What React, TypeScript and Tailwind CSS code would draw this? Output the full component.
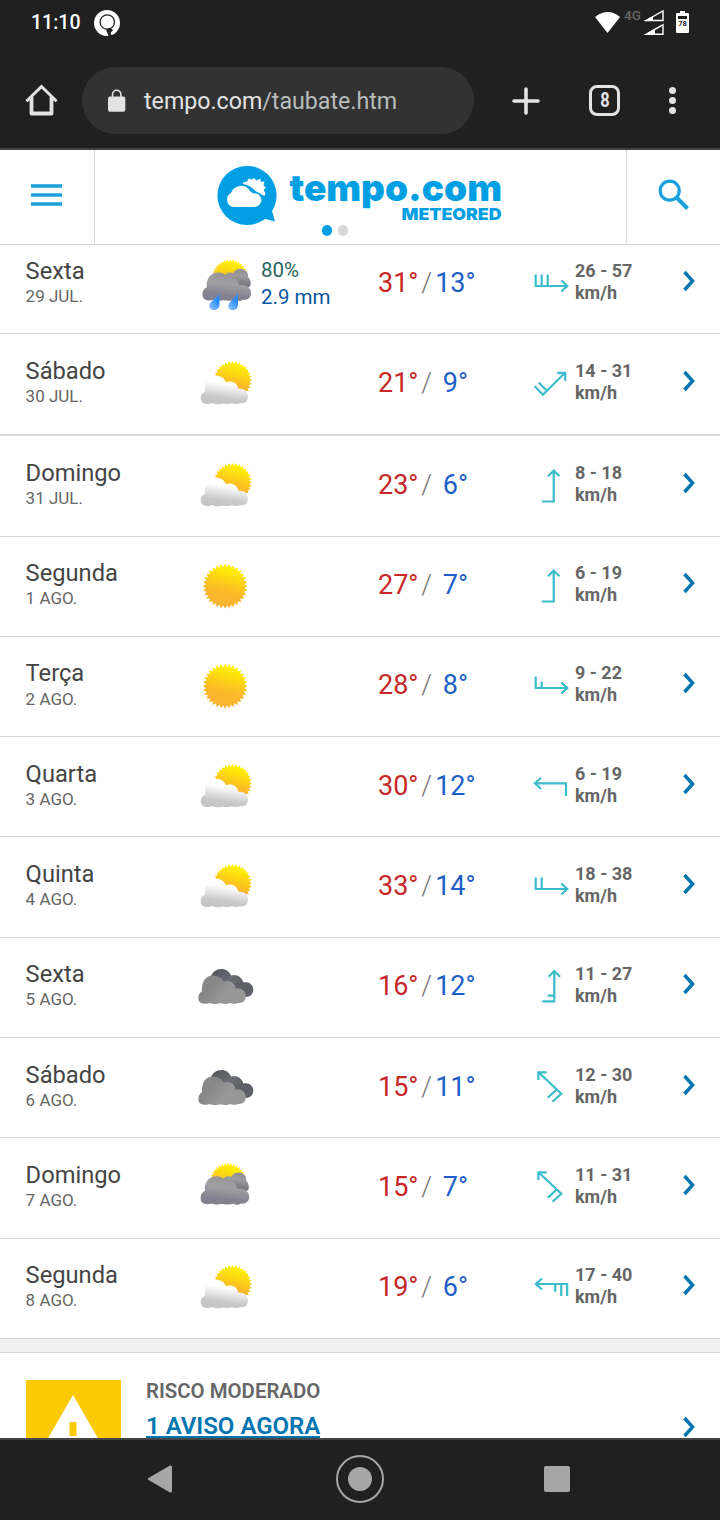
import type { ReactNode } from 'react';

type Sky = 'rain' | 'partly' | 'sun' | 'overcast' | 'cloudy';

interface Day {
  name: string;
  date: string;
  sky: Sky;
  max: number;
  min: number;
  wind: string;
  arrow: string;
  box: string;
  rain?: { chance: string; amount: string };
}

// Wind barbs, drawn in a 40x40 box
const ARROWS = {
  east3: 'M4.7 8.5V20H36.5M10.7 8.5V20M16.7 8.5V20M30.3 14.5L36.3 20L30.3 25.5',
  east2: 'M4.7 8.5V20H36.5M10.7 8.5V20M30.3 14.5L36.3 20L30.3 25.5',
  east15: 'M4.7 8.5V20H36.5M10.7 13.5V20M30.3 14.5L36.3 20L30.3 25.5',
  northEast: 'M34 6.8L12 28.8L3.7 20.2M16 25L7.7 16.5M26.3 6.8H34.2V14.8',
  north: 'M22.7 2.5V33.5H10.7M17 8.3L22.7 2.5L28.4 8.3',
  north15: 'M23.3 2V32.3H11.3M23.3 26.7H16.7M17.6 7.8L23.3 2L29 7.8',
  west: 'M4 14.3H35V27M10 8.7L4 14.3L10 20',
  west25: 'M5 14H36.2V26M30.2 14V26M24.2 14V21.7M11 8.5L5 14L11 19.5',
  northWest: 'M7.5 2.3L30.3 23.7L21.5 31.8M25.6 19.5L16.8 27.8M7.4 10V2.3H15.6',
};

const DAYS: Day[] = [
  { name: 'Sexta', date: '29 JUL.', sky: 'rain', max: 31, min: 13, wind: '26 - 57', arrow: ARROWS.east3, box: '-mt-[11px] h-[100px] border-b pt-px', rain: { chance: '80%', amount: '2.9 mm' } },
  { name: 'Sábado', date: '30 JUL.', sky: 'partly', max: 21, min: 9, wind: '14 - 31', arrow: ARROWS.northEast, box: 'h-[102px] border-b-2 pt-px' },
  { name: 'Domingo', date: '31 JUL.', sky: 'partly', max: 23, min: 6, wind: '8 - 18', arrow: ARROWS.north, box: 'h-[101px] border-b pt-px' },
  { name: 'Segunda', date: '1 AGO.', sky: 'sun', max: 27, min: 7, wind: '6 - 19', arrow: ARROWS.north, box: 'h-[100px] border-b' },
  { name: 'Terça', date: '2 AGO.', sky: 'sun', max: 28, min: 8, wind: '9 - 22', arrow: ARROWS.east15, box: 'h-[100px] border-b pt-[0.4px]' },
  { name: 'Quarta', date: '3 AGO.', sky: 'partly', max: 30, min: 12, wind: '6 - 19', arrow: ARROWS.west, box: 'h-[100px] border-b pt-px' },
  { name: 'Quinta', date: '4 AGO.', sky: 'partly', max: 33, min: 14, wind: '18 - 38', arrow: ARROWS.east2, box: 'h-[101px] border-b pt-px' },
  { name: 'Sexta', date: '5 AGO.', sky: 'overcast', max: 16, min: 12, wind: '11 - 27', arrow: ARROWS.north15, box: 'h-[100px] border-b' },
  { name: 'Sábado', date: '6 AGO.', sky: 'overcast', max: 15, min: 11, wind: '12 - 30', arrow: ARROWS.northWest, box: 'h-[100px] border-b pt-px' },
  { name: 'Domingo', date: '7 AGO.', sky: 'cloudy', max: 15, min: 7, wind: '11 - 31', arrow: ARROWS.northWest, box: 'h-[101px] border-b pt-px' },
  { name: 'Segunda', date: '8 AGO.', sky: 'partly', max: 19, min: 6, wind: '17 - 40', arrow: ARROWS.west25, box: 'h-[100px] border-b' },
];

// Toothed sun outline
const sunPoints = (cx: number, cy: number, outer: number, inner: number, teeth = 32) =>
  Array.from({ length: teeth * 2 }, (_, i) => {
    const r = i % 2 === 0 ? outer : inner;
    const a = (i * Math.PI) / teeth;
    return `${(cx + r * Math.sin(a)).toFixed(2)},${(cy - r * Math.cos(a)).toFixed(2)}`;
  }).join(' ');

function Gradients() {
  return (
    <svg className="absolute size-0" aria-hidden="true">
      <defs>
        <linearGradient id="sun" x1="0.62" y1="0" x2="0.38" y2="1">
          <stop offset="0.08" stopColor="#fff200" />
          <stop offset="0.62" stopColor="#fbb829" />
          <stop offset="1" stopColor="#f9b233" />
        </linearGradient>
        <linearGradient id="white" x1="0.6" y1="0.1" x2="0.4" y2="1">
          <stop offset="0.2" stopColor="#ffffff" />
          <stop offset="0.75" stopColor="#c9c9c9" />
          <stop offset="1" stopColor="#c4c4c4" />
        </linearGradient>
        <linearGradient id="gray" x1="0.6" y1="0" x2="0.4" y2="1">
          <stop offset="0" stopColor="#949497" />
          <stop offset="0.4" stopColor="#a0a0a2" />
          <stop offset="0.8" stopColor="#828190" />
        </linearGradient>
        <linearGradient id="grayBack" x1="0.6" y1="0" x2="0.4" y2="1">
          <stop offset="0" stopColor="#8f8f94" />
          <stop offset="0.35" stopColor="#9c9c9f" />
          <stop offset="0.85" stopColor="#6f6e7c" />
        </linearGradient>
        <linearGradient id="dark" x1="0" y1="0" x2="1" y2="0.5">
          <stop offset="0" stopColor="#8a8a8a" />
          <stop offset="0.35" stopColor="#868686" />
          <stop offset="0.7" stopColor="#979797" />
        </linearGradient>
        <linearGradient id="slate" x1="0" y1="0" x2="1" y2="0.6">
          <stop offset="0.1" stopColor="#54575c" />
          <stop offset="0.5" stopColor="#6a6d74" />
          <stop offset="0.8" stopColor="#5c5f66" />
        </linearGradient>
        <linearGradient id="drop" x1="1" y1="0" x2="0.2" y2="1">
          <stop offset="0.4" stopColor="#2c8cff" />
          <stop offset="1" stopColor="#8cc3fb" />
        </linearGradient>
      </defs>
    </svg>
  );
}

function GrayClouds() {
  return (
    <>
      <polygon points={sunPoints(32.5, 24.5, 18.6, 16, 36)} fill="url(#sun)" />
      <path
        d="M27 24C27.5 20 32 18 35.500 20C37.500 16.500 41 15.200 44 15.600C48.500 16.200 51 19.500 50.600 24C53 26 54 30 52.600 33L49 35L34 32Z"
        fill="url(#grayBack)"
      />
      <path
        d="M10 47C6.500 46.600 5 44 5 41C5 37.500 7 35 9.300 34C8.300 26 13 19.300 21 19.300C25 19.300 27.500 21 29 23.200C34 21 39.500 24 41.800 31.600C48 31 53.600 34 53.600 40C53.600 44.500 50 47.200 45.500 46.500C43 48 40 48 38 46.800C33 48 29 47.400 26 47C22 47.800 18 47.200 16 46.400C14 47.200 12 47.400 10 47Z"
        fill="url(#gray)"
      />
    </>
  );
}

function SkyIcon({ sky }: { sky: Sky }) {
  return (
    <svg viewBox="0 0 60 60" className="size-[60px]">
      {sky === 'sun' && <polygon points={sunPoints(30.2, 31.2, 22.6, 19.4)} fill="url(#sun)" />}
      {sky === 'partly' && (
        <>
          <polygon points={sunPoints(37.6, 27.3, 19.4, 16.9)} fill="url(#sun)" />
          <path
            d="M12 51C7.500 51 5.500 48 5.700 44.500C6 41.500 7.700 39.700 10 38.800C9 30 13.500 22.800 21 22.800C26 22.800 29.500 25.500 31 29.300C36 27.300 42 29.500 43.500 35.800C49 35 53 38.500 53 43.500C53 48.500 49.500 51 45.500 50C42 51.500 39 51 37 50.300C34 51.500 30 51 27.500 50.400C23 52 19 51 17 50C15 51 13.500 51 12 51Z"
            fill="url(#white)"
          />
        </>
      )}
      {sky === 'overcast' && (
        <g transform="translate(0 0.600)">
          <path
            d="M15 22C17 15 21.500 12.300 26.500 12.300C31 12.300 34.500 14.800 36 18.800C41 17 47 20 48.500 26C54 24.500 58.300 28.500 58.300 33C58.300 37.500 55 40.500 51 40.500L30 38Z"
            fill="url(#slate)"
          />
          <path
            d="M8 47C4.500 46.500 3.200 44 3.400 41C3.500 38 5 36 7 34.700C6.500 26 10 19 17.700 19C23 19 27 21.500 28.500 25.200C34 22.500 39.500 26 40.500 31.800C46.500 31 50.800 34.500 50.800 39.500C50.800 44.500 47 47 43 46.300C40 47.500 37 47.500 35.500 46.500C32 47.800 28 47.300 25.500 46.700C21 48 17 47.300 14.500 46.300C12 47.500 10 47.300 8 47Z"
            fill="url(#dark)"
          />
        </g>
      )}
      {sky === 'cloudy' && (
        <g transform="translate(0.6 0)">
          <GrayClouds />
        </g>
      )}
      {sky === 'rain' && (
        <>
          <g transform="translate(2.500 0.300)">
            <GrayClouds />
          </g>
          <path d="M24.500 41V51C24.500 55 21.500 57.400 18.500 57.200C15 57 13.200 53.500 15 50.500C17.500 47 21 45 24.500 41Z" fill="url(#drop)" />
          <path d="M43 40.500V51C43 55 40.500 57.400 37.500 57.200C33.800 57 32 53.500 34 50.500C36.500 47 40 45 43 40.500Z" fill="url(#drop)" />
        </>
      )}
    </svg>
  );
}

function Chevron() {
  return (
    <svg viewBox="0 0 14 22" className="h-[22px] w-[14px]" fill="none" stroke="#0075b0" strokeWidth="3.4">
      <path d="M1.500 2L9.600 11L1.500 20" />
    </svg>
  );
}

function DayRow({ day }: { day: Day }) {
  return (
    <li
      className={`grid grid-cols-[169px_66px_117px_98px_55px_44px_108px_1fr] items-start border-[#d9d9d9] pl-[26px] ${day.box}`}
    >
      <div className="-ml-[0.4px] pt-[22px]">
        <p className="text-[23.7px] leading-7 text-[#444]">{day.name}</p>
        <p className="-mt-[0.8px] text-[17px] leading-6 text-[#666]">{day.date}</p>
      </div>
      <div className="pt-[18px]">
        <SkyIcon sky={day.sky} />
      </div>
      <div className="pt-[22px] text-[20.5px] leading-[27px]">
        {day.rain && (
          <>
            <p className="text-[#2b6360]">{day.rain.chance}</p>
            <p className="text-[#0b559b]">{day.rain.amount}</p>
          </>
        )}
      </div>
      <div className="flex pt-8 text-[27px] leading-8">
        <span className="w-[41.5px] text-[#c62828]">{day.max}°</span>
        <span className="w-[17px] text-center font-light text-[#777]">/</span>
        <span className="w-[43px] text-center text-[#1f5fc8]">{day.min}°</span>
      </div>
      <span />
      <div className="pt-[31px]">
        <svg viewBox="0 0 40 40" className="size-10" fill="none" stroke="#3bbccb" strokeWidth="2.2">
          <path d={day.arrow} />
        </svg>
      </div>
      <p className="w-[70px] pt-[25px] text-[18px] leading-[22px] font-bold text-[#666]">{day.wind} km/h</p>
      <div className="-ml-[0.4px] pt-[35px]">
        <Chevron />
      </div>
    </li>
  );
}

function StatusBar() {
  return (
    <div className="flex h-[45px] items-center pt-px pl-[31px] text-white">
      <span className="w-[63px] text-[19.5px] font-medium">11:10</span>
      <svg viewBox="0 0 26 26" className="mb-px size-[26px]">
        <circle cx="13" cy="13" r="13" fill="#fff" />
        <circle cx="13.300" cy="12" r="7.200" fill="#fff" stroke="#202020" strokeWidth="1.300" />
        <path d="M12 19.500L16 17.800L19 20L16.500 23L18 26L14.500 26Z" fill="#202020" />
      </svg>
      <div className="ml-auto flex h-full w-[125px] items-start">
        <svg viewBox="0 0 26 22" className="mt-[11px] h-[22px] w-[26px]">
          <path d="M0 5Q13 -5 25 5L12.500 21Z" fill="#fff" />
        </svg>
        <span className="mt-[6px] ml-[3px] w-[19.5px] text-[13.5px] font-medium leading-4 text-[#666]">4G</span>
        <svg viewBox="0 0 21 27" className="mt-[7px] h-[27px] w-[21px]">
          <path d="M2 12.500L19 3V12.500Z M2 26.300L19 16.800V26.300Z" fill="none" stroke="#fff" strokeWidth="1.400" />
          <path d="M0 13L9 8V13Z M0 27L11 20.500V27Z" fill="#fff" />
        </svg>
        <div className="mt-[10px] ml-[11.500px] flex w-[13px] flex-col items-center">
          <div className="h-[2px] w-[5px] bg-white" />
          <div className="flex h-5 w-[13px] flex-col items-center rounded-[1px] bg-white pt-[3px]">
            <div className="h-[3px] w-[9px] bg-[#202020]" />
            <span className="mt-px text-[7.5px] leading-[8px] font-bold text-[#202020]">78</span>
          </div>
        </div>
      </div>
    </div>
  );
}

function AddressBar() {
  return (
    <div className="flex h-[111px] items-center pl-[25px]">
      <svg viewBox="0 0 33 33" className="size-[33px]" fill="none" stroke="#e3e3e3" strokeWidth="3.800">
        <path d="M1.500 17.300L16.500 2.500L31.500 17.300" strokeWidth="3" />
        <path d="M6.500 13V29.500H26.500V13" strokeLinejoin="round" />
      </svg>
      <div className="ml-6 flex h-[67px] w-[392px] items-center rounded-full bg-[#323232] pl-[26px]">
        <svg viewBox="0 0 18 24" className="h-6 w-[18px]">
          <path d="M4.500 10V5.500a4.200 4.200 0 0 1 8.400 0V10" fill="none" stroke="#e3e3e3" strokeWidth="1.600" />
          <rect x="0" y="7.500" width="17.300" height="15.300" rx="2" fill="#e3e3e3" />
        </svg>
        <span className="mt-px ml-[18px] text-[23.2px] text-[#e3e3e3]">
          tempo.com<span className="text-[#b9bdbc]">/taubate.htm</span>
        </span>
      </div>
      <svg viewBox="0 0 28 28" className="ml-[37.500px] size-7" stroke="#e3e3e3" strokeWidth="3.600" strokeLinecap="round">
        <path d="M14 2V26M2 14H26" />
      </svg>
      <div className="ml-[49.500px] flex size-[31px] items-center justify-center rounded-[8px] border-[3px] border-[#e3e3e3] text-[20.500px] font-bold text-[#e3e3e3]">
        <span className="scale-x-[0.8]">8</span>
      </div>
      <div className="ml-[49px] flex flex-col gap-[3px]">
        <i className="size-[7px] rounded-full bg-[#e3e3e3]" />
        <i className="size-[7px] rounded-full bg-[#e3e3e3]" />
        <i className="size-[7px] rounded-full bg-[#e3e3e3]" />
      </div>
    </div>
  );
}

function Logo() {
  return (
    <svg viewBox="0 0 286 64" className="mt-[13px] h-16 w-[286px]" fill="#009fe3">
      <circle cx="30" cy="32.500" r="29.600" />
      <path d="M45 55L58 58.500L54 44Z" />
      <g fill="#fff">
        <path d="M16.500 44A7.500 7.500 0 0 1 14 30A10.500 10.500 0 0 1 33 28Q35.500 31 39.500 30.500A6.900 6.900 0 0 1 37.500 44Z" />
        <path d="M26 19.500L30 18.500L31.500 15.500L34.500 16.500L37 15L39.500 17.500L43.500 15.500L43.800 18.800L47.500 18.500L46.500 22.500L49 24.500L46.500 27L48.500 30L47.500 33L38.500 28Q33 22 26 21Z" />
      </g>
      <text x="72.500" y="37.500" fontSize="37" fontWeight="900" fontFamily="Inter, sans-serif" textLength="212.500" lengthAdjust="spacingAndGlyphs">
        tempo.com
      </text>
      <text x="184.500" y="57" fontSize="16" fontWeight="900" fontFamily="Inter, sans-serif" textLength="100" lengthAdjust="spacingAndGlyphs">
        METEORED
      </text>
    </svg>
  );
}

function HeaderCell({ children, side }: { children: ReactNode; side: string }) {
  return <div className={`flex h-full items-center border-[#d9d9d9] ${side}`}>{children}</div>;
}

function SiteHeader() {
  return (
    <header className="relative z-10 flex h-[95px] shrink-0 border-b border-[#d9d9d9] bg-white">
      <HeaderCell side="w-[95px] border-r pl-[31px] pb-1">
        <svg viewBox="0 0 31 22" className="h-[22px] w-[31px]" stroke="#1ba1db" strokeWidth="3.400">
          <path d="M0 2H31M0 11H31M0 20H31" />
        </svg>
      </HeaderCell>
      <div className="flex flex-1 flex-col pl-[122px]">
        <Logo />
        <div className="mt-[-2px] ml-[105px] flex gap-[6px]">
          <i className="h-[11px] w-[10px] rounded-full bg-[#009fe3]" />
          <i className="h-[11px] w-[10px] rounded-full bg-[#d8d8d8]" />
        </div>
      </div>
      <HeaderCell side="w-[94px] border-l pl-[31px] pb-1">
        <svg viewBox="0 0 32 32" className="size-8" fill="none" stroke="#1ba1db">
          <circle cx="11.700" cy="11.700" r="9.500" strokeWidth="3.200" />
          <path d="M18.500 18.500L29.500 29.500" strokeWidth="4" />
        </svg>
      </HeaderCell>
    </header>
  );
}

function Warning() {
  return (
    <section className="flex flex-1 overflow-hidden border-t border-[#d9d9d9] bg-white pt-[27px] pl-[26px]">
      <svg viewBox="0 0 95 95" className="size-[95px] shrink-0">
        <rect width="95" height="95" fill="#fbca04" />
        <path d="M47 15L88 86H6Z" fill="#fff" />
        <path d="M43.500 42H50.500V56H43.500Z" fill="#fbca04" />
      </svg>
      <div className="ml-[25px] w-[536.500px] whitespace-nowrap">
        <p className="mt-[-3px] text-[20.4px] leading-7 font-semibold text-[#666]">RISCO MODERADO</p>
        <p className="mt-[11px] w-fit border-b-2 border-[#0075b0] text-[24px] leading-5 font-semibold text-[#0075b0]">1 AVISO AGORA</p>
      </div>
      <div className="mt-9">
        <Chevron />
      </div>
    </section>
  );
}

function NavBar() {
  return (
    <nav className="flex h-[82px] shrink-0 items-center border-t-2 border-[#444] bg-[#202020] pb-[2px] pl-[147px]">
      <svg viewBox="0 0 26 28" className="h-7 w-[26px]" fill="#a6a6a6">
        <path d="M1.500 13L23 .500Q25 0 25 2V26Q25 28 23 27.500L1.500 15Q0 14 1.500 13Z" />
      </svg>
      <div className="ml-[163px] flex size-12 items-center justify-center rounded-full border-2 border-[#a6a6a6]">
        <div className="size-6 rounded-full bg-[#a6a6a6]" />
      </div>
      <div className="ml-40 size-[26px] rounded-[2px] bg-[#a6a6a6]" />
    </nav>
  );
}

export default function App() {
  return (
    <div className="flex h-[1520px] w-[720px] flex-col overflow-hidden bg-white font-[Roboto,sans-serif]">
      <Gradients />
      <div className="h-[150px] shrink-0 border-b-2 border-[#444] bg-[#202020]">
        <StatusBar />
        <AddressBar />
      </div>
      <SiteHeader />
      <ul className="shrink-0">
        {DAYS.map((day) => (
          <DayRow key={day.date} day={day} />
        ))}
      </ul>
      <div className="h-[13px] shrink-0 bg-[#f1f1f1]" />
      <Warning />
      <NavBar />
    </div>
  );
}
